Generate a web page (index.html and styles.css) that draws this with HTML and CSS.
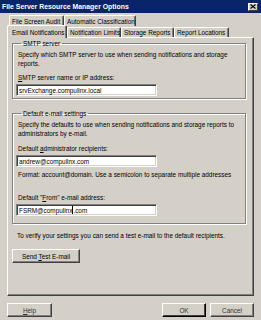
FILE: index.html
```html
<!DOCTYPE html>
<html lang="en">
<head>
  <meta charset="UTF-8">
  <title>File Server Resource Manager Options</title>
  <link rel="stylesheet" href="styles.css">
</head>
<body>
  <div class="window">
    <div class="titlebar">
      <span class="title">File Server Resource Manager Options</span>
      <span class="close">
        <svg width="6" height="5" viewBox="0 0 6 5"><path d="M0.5 0.5 L5.5 4.5 M5.5 0.5 L0.5 4.5" stroke="#000" stroke-width="1.1"/></svg>
      </span>
    </div>

    <div class="tabs">
      <div class="tab-row back">
        <div class="tab tab-audit">File Screen Audit</div>
        <div class="tab tab-class">Automatic Classification</div>
      </div>
      <div class="tab-row front">
        <div class="tab tab-email current">Email Notifications</div>
        <div class="tab tab-limits">Notification Limits</div>
        <div class="tab tab-storage">Storage Reports</div>
        <div class="tab tab-locations">Report Locations</div>
      </div>
    </div>

    <div class="panel">
      <fieldset class="group group-smtp">
        <legend>SMTP server</legend>
        <p class="hint">Specify which SMTP server to use when sending notifications and storage<br>reports.</p>
        <label class="field-label"><u>S</u>MTP server name or IP address:</label>
        <div class="textbox">srvExchange.compulinx.local</div>
      </fieldset>

      <fieldset class="group group-defaults">
        <legend>Default e-mail settings</legend>
        <p class="hint">Specify the defaults to use when sending notifications and storage reports to<br>administrators by e-mail.</p>
        <label class="field-label label-admin">Default <u>a</u>dministrator recipients:</label>
        <div class="textbox">andrew@compulinx.com</div>
        <p class="format">Format: account@domain. Use a semicolon to separate multiple addresses</p>
        <label class="field-label label-from">Default "<u>F</u>rom" e-mail address:</label>
        <div class="textbox">FSRM@compulinx<span class="caret"></span>.com</div>
      </fieldset>

      <p class="verify">To verify your settings you can send a test e-mail to the default recipients.</p>
      <button class="btn btn-test"><span>Send <u>T</u>est E-mail</span></button>
    </div>

    <div class="footer">
      <button class="btn btn-help"><span><u>H</u>elp</span></button>
      <span class="spacer"></span>
      <button class="btn btn-ok">OK</button>
      <button class="btn btn-cancel">Cancel</button>
    </div>
  </div>
</body>
</html>
```

FILE: styles.css
```css
* {
  box-sizing: border-box;
}

body {
  margin: 0;
  background: #d4d0c8;
  font-family: "Liberation Sans", Arial, sans-serif;
  font-size: 6.4px;
  line-height: 9px;
  color: #000;
}

.window {
  width: 261px;
  height: 320px;
  background: #d4d0c8;
  display: flex;
  flex-direction: column;
  overflow: hidden;
}

.titlebar {
  height: 13px;
  flex: none;
  background: #0a246a;
  display: flex;
  align-items: center;
  justify-content: space-between;
  padding: 0 3px 0 2px;
}

.title {
  color: #fff;
  font-weight: bold;
  font-size: 6.9px;
}

.close {
  width: 10px;
  height: 8px;
  background: #d4d0c8;
  border-top: 1px solid #fff;
  border-left: 1px solid #fff;
  border-right: 1px solid #404040;
  border-bottom: 1px solid #404040;
  display: flex;
  align-items: center;
  justify-content: center;
}

/* tabs */
.tabs {
  margin-top: 2px;
  height: 22px;
  flex: none;
  padding-left: 7px;
  display: flex;
  flex-direction: column;
}

.tab-row {
  display: flex;
  height: 11px;
}

.tab-row.back {
  padding-left: 2px;
}

.tab-row.front {
  align-items: flex-end;
}

.tab {
  height: 11px;
  border-top: 1px solid #fff;
  border-left: 1px solid #fff;
  border-right: 1px solid #404040;
  box-shadow: inset -1px 0 #808080;
  border-radius: 2px 2px 0 0;
  display: flex;
  align-items: center;
  padding-left: 2px;
  white-space: nowrap;
  background: #d4d0c8;
}

.front .tab {
  height: 10px;
}

.front .tab.current {
  height: 13px;
  margin-bottom: -1px;
  padding-left: 4px;
  position: relative;
  z-index: 1;
}

.tab-audit { width: 55px; }
.tab-class { width: 72px; }
.tab-email { width: 60px; }
.tab-limits { width: 54px; }
.tab-storage { width: 53px; }
.tab-locations { width: 55px; }

/* panel */
.panel {
  margin: 0 7px;
  height: 259px;
  flex: none;
  border-top: 1px solid #fff;
  border-left: 1px solid #fff;
  border-right: 1px solid #404040;
  border-bottom: 1px solid #404040;
  box-shadow: inset -1px -1px #808080;
  padding: 1px 7px 0 4px;
}

.group {
  margin: 0;
  padding: 0 4px 2px 5px;
  min-width: 0;
  border: 1px solid #808080;
  box-shadow: inset 1px 1px #fff, 1px 1px #fff;
}

.group legend {
  padding: 0 2px;
  margin-left: 3px;
  line-height: 9px;
}

.group-defaults {
  margin-top: 10px;
  padding-bottom: 7px;
}

.hint {
  margin: 2px 0 0;
}

.field-label {
  display: block;
  margin-top: 5px;
}

.label-admin {
  margin-top: 6px;
}

.label-from {
  margin-top: 14px;
}

.textbox {
  margin: 2px 0 0 -2px;
  width: 141px;
  height: 12px;
  background: #fff;
  border-top: 1px solid #808080;
  border-left: 1px solid #808080;
  border-right: 1px solid #fff;
  border-bottom: 1px solid #fff;
  box-shadow: inset 1px 1px #404040, inset -1px -1px #d4d0c8;
  padding: 1px 0 0 2px;
  line-height: 9px;
  white-space: nowrap;
}

.caret {
  display: inline-block;
  width: 1px;
  height: 8px;
  background: #000;
  vertical-align: -1px;
}

.format {
  margin: 3px 0 0;
}

.verify {
  margin: 7px 0 0 5px;
}

/* buttons */
.btn {
  font: inherit;
  color: #000;
  height: 14px;
  padding: 0;
  background: #d4d0c8;
  border-top: 1px solid #fff;
  border-left: 1px solid #fff;
  border-right: 1px solid #404040;
  border-bottom: 1px solid #404040;
  box-shadow: inset -1px -1px #808080;
  display: flex;
  align-items: center;
  justify-content: center;
}

.btn-test {
  width: 68px;
  margin-top: 9px;
}

.footer {
  display: flex;
  padding: 7px 7px 0;
}

.spacer {
  flex: 1;
}

.btn-help {
  width: 45px;
  color: #333;
}

.btn-ok {
  width: 44px;
  color: #333;
  border-right: 1px solid #000;
  border-bottom: 1px solid #000;
  box-shadow: inset -1px -1px #404040;
}

.btn-cancel {
  width: 44px;
  margin-left: 4px;
  color: #333;
}
```
